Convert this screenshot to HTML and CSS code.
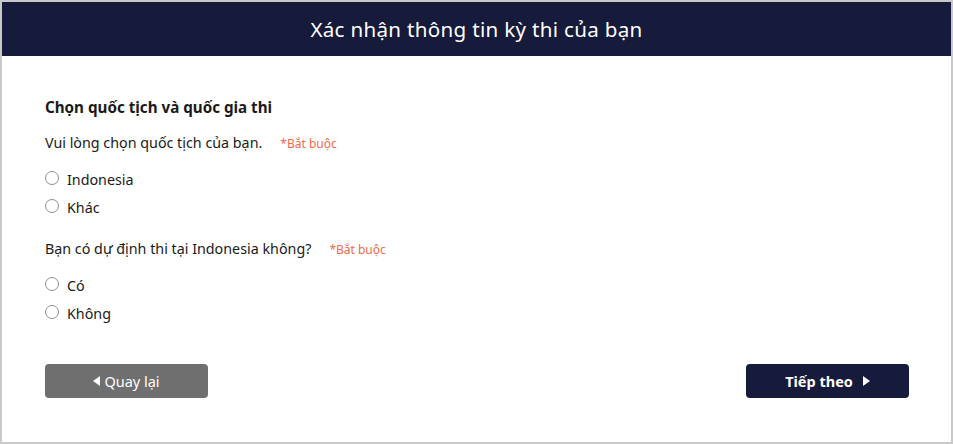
FILE: index.html
```html
<!DOCTYPE html>
<html lang="vi">
<head>
<meta charset="utf-8">
<link rel="stylesheet" href="styles.css">
</head>
<body>
<div class="frame">
  <header class="top">Xác nhận thông tin kỳ thi của bạn</header>
  <main class="content">
    <h2 class="title">Chọn quốc tịch và quốc gia thi</h2>
    <div class="question">
      <p class="q-label">Vui lòng chọn quốc tịch của bạn.<span class="req">*Bắt buộc</span></p>
      <label class="opt"><span class="radio"></span>Indonesia</label>
      <label class="opt"><span class="radio"></span>Khác</label>
    </div>
    <div class="question">
      <p class="q-label">Bạn có dự định thi tại Indonesia không?<span class="req">*Bắt buộc</span></p>
      <label class="opt"><span class="radio"></span>Có</label>
      <label class="opt"><span class="radio"></span>Không</label>
    </div>
    <div class="actions">
      <button class="btn btn-back"><span class="tri tri-left"></span>Quay lại</button>
      <button class="btn btn-next">Tiếp theo<span class="tri tri-right"></span></button>
    </div>
  </main>
</div>
</body>
</html>
```

FILE: styles.css
```css
* { box-sizing: border-box; }
html, body { margin: 0; padding: 0; background: #fff; }
body { font-family: "Noto Sans", "Open Sans", sans-serif; color: #1a1a1a; }
.frame {
  width: 953px;
  height: 444px;
  border: 2px solid #c9c9c9;
  display: flex;
  flex-direction: column;
}
.top {
  height: 54px;
  background: #161a3b;
  color: #fff;
  font-size: 20.6px;
  display: flex;
  align-items: center;
  justify-content: center;
  letter-spacing: 0.3px;
}
.content {
  padding: 40px 42px 0 43px;
  flex: 1;
  display: flex;
  flex-direction: column;
}
.title {
  margin: 0 0 14px;
  font-size: 15.2px;
  font-weight: 700;
  line-height: 22px;
}
.question { display: flex; flex-direction: column; margin-bottom: 16px; }
.q-label {
  margin: 0 0 11px;
  font-size: 14.3px;
  line-height: 22px;
}
.req {
  color: #f26a4b;
  font-size: 12px;
  margin-left: 18px;
}
.opt {
  display: flex;
  align-items: center;
  font-size: 14.3px;
  line-height: 28px;
  height: 28px;
}
.radio {
  width: 14px;
  height: 14px;
  border: 1px solid #8f8f8f;
  border-radius: 50%;
  margin: 0 8px 4px 0;
}
.actions {
  margin-top: 20px;
  display: flex;
  justify-content: space-between;
}
.btn {
  width: 163px;
  height: 34px;
  border: none;
  border-radius: 4px;
  color: #fff;
  font-family: "Noto Sans", sans-serif;
  font-size: 14.5px;
  display: flex;
  align-items: center;
  justify-content: center;
  gap: 4px;
}
.btn-back { background: #6f6f6f; }
.btn-next { background: #161a3b; font-weight: 700; }
.tri { width: 0; height: 0; border-top: 5.5px solid transparent; border-bottom: 5.5px solid transparent; }
.tri-left { border-right: 7px solid #fff; }
.tri-right { border-left: 7px solid #fff; margin-left: 6px; }
```
